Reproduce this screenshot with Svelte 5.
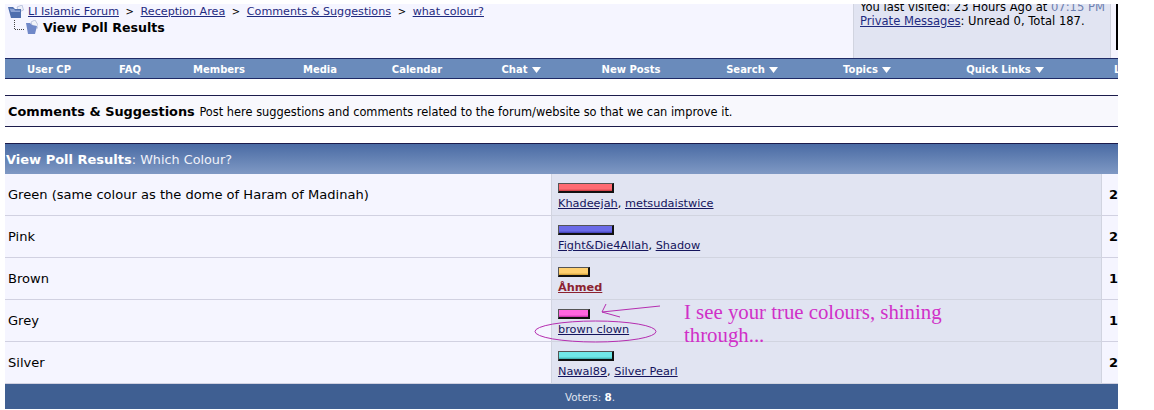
<script>
  const navItems = [
    { label: 'User CP' }, { label: 'FAQ' }, { label: 'Members' }, { label: 'Media' }, { label: 'Calendar' },
    { label: 'Chat', menu: true }, { label: 'New Posts' }, { label: 'Search', menu: true },
    { label: 'Topics', menu: true }, { label: 'Quick Links', menu: true }, { label: 'L', last: true }
  ];
  const rows = [
    { option: 'Green (same colour as the dome of Haram of Madinah)', color: 'red', width: 56, voters: ['Khadeejah', 'metsudaistwice'], count: '2' },
    { option: 'Pink', color: 'blue', width: 56, voters: ['Fight&Die4Allah', 'Shadow'], count: '2' },
    { option: 'Brown', color: 'gold', width: 32, voters: ['Åhmed'], special: true, count: '1' },
    { option: 'Grey', color: 'pink', width: 32, voters: ['brown clown'], count: '1' },
    { option: 'Silver', color: 'cyan', width: 56, voters: ['Nawal89', 'Silver Pearl'], count: '2' }
  ];
</script>

<div class="page">
  <header class="top">
    <div class="crumbs">
      <div class="trail">
        <svg class="folder" width="16" height="13" viewBox="0 0 16 13">
          <path d="M9 2 L14 0 L15.5 5 L11 7 Z" fill="#eef0f8" stroke="#9aa8cc" stroke-width=".6"/>
          <path d="M0 2 L5 2 L7 4 L13 4 L13 13 L3 13 Z" fill="#4f6fae"/>
          <path d="M1.5 3.5 L6 4 L7 5.5 L12 5.5 L12 7 L3 7 Z" fill="#8ea4d4"/>
        </svg>
        <a href="#a">LI Islamic Forum</a><span class="sep">&gt;</span><a href="#a">Reception Area</a><span class="sep">&gt;</span><a href="#a">Comments &amp; Suggestions</a><span class="sep">&gt;</span><a href="#a">what colour?</a>
      </div>
      <div class="current">
        <svg class="tree" width="24" height="14" viewBox="0 0 24 14">
          <path d="M0.5 0 V9.5 H11" fill="none" stroke="#444" stroke-dasharray="1 1"/>
          <path d="M17 2 L21 0 L24 5 L24 8 L19 8 Z" fill="#f2f3f8" stroke="#a0aacb" stroke-width=".6"/>
          <path d="M12 3 L16 3 L18 5 L23 6 L21 14 L14 14 Z" fill="#7088c8"/>
        </svg>
        <strong>View Poll Results</strong>
      </div>
    </div>
    <div class="visit">
      <div>You last visited: 23 Hours Ago at <span class="time">07:15 PM</span></div>
      <div><a href="#a">Private Messages</a>: Unread 0, Total 187.</div>
    </div>
    <div class="edge"></div>
  </header>

  <nav class="nav">
    {#each navItems as item}
      <span class="nav-item" class:last={item.last}>{item.label}{#if item.menu}<svg class="caret" width="9" height="6" viewBox="0 0 9 6"><path d="M0 0 H9 L4.5 6 Z" fill="#fff"/></svg>{/if}</span>
    {/each}
  </nav>

  <section class="forumbar">
    <strong>Comments &amp; Suggestions</strong> <span>Post here suggestions and comments related to the forum/website so that we can improve it.</span>
  </section>

  <section class="poll">
    <div class="poll-head"><strong>View Poll Results</strong><span class="head-rest">: Which Colour?</span></div>
    {#each rows as row}
      <div class="row">
        <div class="option">{row.option}</div>
        <div class="result">
          <div class="bar {row.color}" style="width: {row.width}px"></div>
          <div class="voters">
            {#each row.voters as voter, i}{#if i > 0}{', '}{/if}<a href="#a" class:special={row.special}>{voter}</a>{/each}
          </div>
        </div>
        <div class="count">{row.count}</div>
      </div>
    {/each}
    <div class="poll-foot">Voters: <strong>8</strong>.</div>

    <svg class="marks" width="140" height="50" viewBox="0 0 140 50">
      <ellipse cx="70.5" cy="31.5" rx="60.5" ry="10.5" fill="none" stroke="#b52db0" stroke-width="1"/>
      <path d="M135 6 L77 12 M81 4 L77 12 L95 17" fill="none" stroke="#b52db0" stroke-width="1"/>
    </svg>
    <p class="note">I see your true colours, shining through...</p>
  </section>
</div>

<style>
  :global(body) { margin: 0; background: #fff; }
  .page {
    width: 1113px;
    height: 406px;
    padding: 4px 0 0 5px;
    overflow: hidden;
    font-family: "DejaVu Sans", Verdana, sans-serif;
    font-size: 11.4px;
    color: #000;
    position: relative;
  }
  a { color: #1f2a80; }
  .top {
    display: flex;
    height: 54px;
    background: #f5f5ff;
    overflow: hidden;
  }
  .crumbs { flex: 0 0 848px; }
  .trail { display: flex; align-items: center; height: 14px; white-space: nowrap; font-size: 11.15px; }
  .folder { margin: 0 4px 0 3px; flex: none; }
  .sep { margin: 0 6.6px; font-size: 10px; }
  .current { display: flex; align-items: center; height: 18px; margin-left: 9px; }
  .tree { flex: none; margin-right: 5px; }
  .current strong { font-size: 12.6px; }
  .visit {
    flex: 0 0 258px;
    background: #e1e4f2;
    border-left: 1px solid #d1d4e0;
    border-right: 1px solid #d1d4e0;
    padding-left: 6px;
    box-sizing: border-box;
    line-height: 14px;
    white-space: nowrap;
    font-size: 11.55px;
  }
  .visit > div:first-child { margin-top: -4px; }
  .time { color: #6d7fb0; }
  .edge { width: 2px; height: 46px; margin-left: 5px; background: #000; flex: none; }
  .nav {
    display: grid;
    grid-template-columns: 88px 74px 104px 98px 96px 112px 108px 134px 96px 180px 23px;
    height: 19px;
    border-top: 1px solid #1e2a66;
    border-bottom: 1px solid #1e2a66;
    background: #6a8bbb;
    color: #fff;
    font-size: 10px;
    font-weight: bold;
    line-height: 21px;
    white-space: nowrap;
    overflow: hidden;
  }
  .nav-item { text-align: center; overflow: hidden; }
  .nav-item.last { text-align: left; padding-left: 19px; }
  .caret { margin-left: 4px; }
  .forumbar {
    margin-top: 16px;
    height: 30px;
    border-top: 1px solid #1c1c4c;
    border-bottom: 1px solid #1c1c4c;
    background: #f8f8fd;
    padding-left: 3px;
    line-height: 32px;
    white-space: nowrap;
  }
  .forumbar strong { font-size: 12.9px; margin-right: 1px; }
  .poll { margin-top: 16px; position: relative; }
  .poll-head {
    height: 30px;
    border-top: 1px solid #1c1c4c;
    background: linear-gradient(#4a6ba4, #7f99c4);
    color: #f0f2fa;
    padding-left: 1px;
    line-height: 31px;
  }
  .poll-head strong { font-size: 13px; color: #fff; }
  .head-rest { font-size: 12.8px; }
  .row {
    display: grid;
    grid-template-columns: 546px 551px 16px;
    grid-template-rows: 42px;
    height: 42px;
  }
  .option {
    height: 42px;
    box-sizing: border-box;
    overflow: hidden;
    background: #f5f5ff;
    border-bottom: 1px solid #d1d1e1;
    padding-left: 3px;
    line-height: 41px;
    font-size: 13.05px;
  }
  .result {
    height: 42px;
    box-sizing: border-box;
    background: #e1e4f2;
    border-left: 1px solid #d1d4e0;
    border-right: 1px solid #d1d4e0;
    border-bottom: 1px solid #d1d4e0;
    padding: 9px 0 0 6px;
    font-size: 11.3px;
    line-height: 14px;
  }
  .bar {
    height: 10px;
    border: 1px solid #111;
    border-right-width: 2px;
    border-bottom-width: 2px;
    border-top-color: #555;
    border-left-color: #555;
    box-sizing: border-box;
    margin-bottom: 4px;
  }
  .red { background: linear-gradient(#ff6b72 70%, #c83a40); }
  .blue { background: linear-gradient(#6b6be8 70%, #3c3cb0); }
  .gold { background: linear-gradient(#ffd070 70%, #cc9a30); }
  .pink { background: linear-gradient(#ff66e0 70%, #c030a8); }
  .cyan { background: linear-gradient(#70e8e8 70%, #38a8a8); }
  .voters { white-space: nowrap; }
  .voters a { color: #14145c; }
  .voters a.special { color: #8c2230; font-weight: bold; }
  .count {
    height: 42px;
    box-sizing: border-box;
    background: #f5f5ff;
    border-bottom: 1px solid #d1d1e1;
    padding-left: 7px;
    font-weight: bold;
    font-size: 13px;
    line-height: 41px;
    overflow: hidden;
  }
  .poll-foot {
    height: 25px;
    background: #3f5f92;
    color: #dfe3f0;
    padding-left: 57px;
    text-align: center;
    line-height: 26px;
    font-size: 10.4px;
  }
  .poll-foot strong { color: #fff; }
  .marks { position: absolute; left: 520px; top: 157px; }
  .note {
    position: absolute;
    left: 679px;
    top: 157px;
    width: 290px;
    margin: 0;
    font-family: "Liberation Serif", "Times New Roman", serif;
    font-size: 20.8px;
    line-height: 23px;
    color: #d030c8;
  }
</style>
